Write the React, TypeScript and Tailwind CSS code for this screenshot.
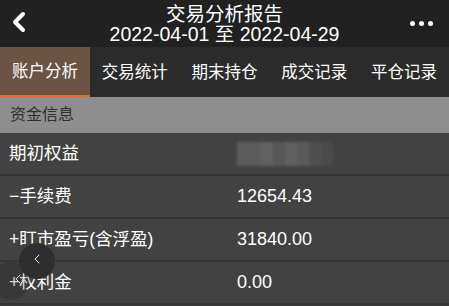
import { ChevronLeft } from 'lucide-react'

const tabs = ['账户分析', '交易统计', '期末持仓', '成交记录', '平仓记录']

const rows = [
  { label: '期初权益', value: null },
  { label: '−手续费', value: '12654.43' },
  { label: '+盯市盈亏(含浮盈)', value: '31840.00' },
  { label: '+权利金', value: '0.00' },
]

export default function App() {
  return (
    <div
      className="w-[449px] h-[306px] overflow-hidden relative bg-[#424242] text-white"
      style={{ fontFamily: '"Liberation Sans", "Noto Sans CJK SC", sans-serif' }}
    >
      {/* Header */}
      <div className="h-[47px] bg-[#212121] flex items-center relative">
        <ChevronLeft size={32} strokeWidth={3} className="absolute left-[3px] top-[6px] text-white" />
        <div className="flex-1 flex flex-col items-center leading-[20px] text-[19.5px] pt-[1px]">
          <span>交易分析报告</span>
          <span>2022-04-01 至 2022-04-29</span>
        </div>
        <div className="absolute right-[16px] top-[21px] flex gap-[4px]">
          <span className="w-[5px] h-[5px] rounded-full bg-white" />
          <span className="w-[5px] h-[5px] rounded-full bg-white" />
          <span className="w-[5px] h-[5px] rounded-full bg-white" />
        </div>
      </div>

      {/* Tabs */}
      <div className="h-[50px] bg-[#2b2b2b] flex">
        {tabs.map((t, i) => (
          <div
            key={t}
            className={`flex-1 flex items-center justify-center text-[16.5px] ${i === 0 ? 'bg-[#6b5444] border-b-[2px] border-[#e06d25]' : ''}`}
          >
            {t}
          </div>
        ))}
      </div>

      {/* Section header */}
      <div className="h-[36px] bg-[#8e8e8e] flex items-center pl-[10px] text-[16px] text-[#2e2e2e]">
        资金信息
      </div>

      {/* Rows */}
      {rows.map((r) => (
        <div key={r.label} className="h-[43px] flex items-center border-b-[2px] border-[#353535] bg-[#424242] text-[17.5px]">
          <span className="w-[237px] pl-[9px]">{r.label}</span>
          {r.value ? (
            <span className="text-[18px]">{r.value}</span>
          ) : (
            <div className="flex blur-[1.5px]">
              <div className="w-[24px] h-[24px] bg-[#5c5c5c]" />
              <div className="w-[12px] h-[24px] bg-[#626262]" />
              <div className="w-[12px] h-[24px] bg-[#575757]" />
              <div className="w-[12px] h-[24px] bg-[#606060]" />
              <div className="w-[12px] h-[24px] bg-[#5a5a5a]" />
              <div className="w-[12px] h-[24px] bg-[#505050]" />
              <div className="w-[12px] h-[24px] bg-[#4a4a4a]" />
            </div>
          )}
        </div>
      ))}

      {/* Floating back buttons */}
      <div className="absolute left-[-8px] top-[262px] w-[38px] h-[38px] rounded-full bg-black/15 flex items-center justify-center">
        <ChevronLeft size={16} strokeWidth={1.5} className="text-white/80 ml-[14px] -mt-[4px]" />
      </div>
      <div className="absolute left-[19px] top-[243px] w-[36px] h-[36px] rounded-full bg-[#2e2e2e] flex items-center justify-center">
        <ChevronLeft size={16} strokeWidth={1.5} className="text-white/90 -mt-[4px]" />
      </div>
    </div>
  )
}
